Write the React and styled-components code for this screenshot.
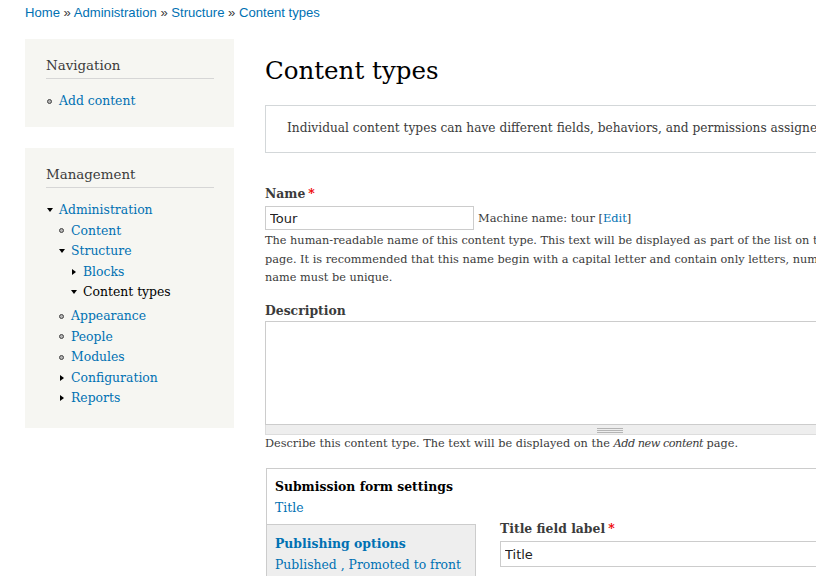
import React from "react";
import styled, { createGlobalStyle } from "styled-components";

const LINK = "#0071b3";
const TEXT = "#3b3b3b";
const SERIF = '"DejaVu Serif", "Liberation Serif", serif';
const SANS = '"DejaVu Sans", "Liberation Sans", sans-serif';

const GlobalStyle = createGlobalStyle`
  html, body { margin: 0; padding: 0; overflow: hidden; background: #fff; }
  body { font-family: ${SERIF}; color: ${TEXT}; }
  a { color: ${LINK}; text-decoration: none; }
`;

const Page = styled.div`
  width: 816px;
  height: 576px;
  overflow: hidden;
  box-sizing: border-box;
  padding: 4px 0 0 25px;
`;

const Breadcrumb = styled.nav`
  font-family: "Liberation Sans", Arial, sans-serif;
  font-size: 13.1px;
  line-height: 18px;
  color: ${TEXT};
  white-space: nowrap;
`;

const Layout = styled.div`
  display: flex;
  align-items: flex-start;
  gap: 31px;
  margin-top: 17px;
`;

const Sidebar = styled.aside`
  flex: 0 0 209px;
  display: flex;
  flex-direction: column;
  gap: 21px;
`;

const Block = styled.section`
  background: #f6f6f2;
  padding: 17px 20px ${(p) => p.$pb || 15.5}px 21px;
`;

const BlockTitle = styled.h2`
  margin: 0 0 12px;
  font-family: ${SERIF};
  font-weight: normal;
  font-size: 13.4px;
  line-height: 20px;
  color: ${TEXT};
  padding-bottom: 2px;
  border-bottom: 1px solid #d6d6d6;
`;

const Menu = styled.ul`
  list-style: none;
  margin: 0 0 ${(p) => (p.$nested ? 3.5 : 0)}px;
  padding: 0 0 0 ${(p) => (p.$nested ? 12 : 0)}px;
`;

const Item = styled.li`
  margin: 0;
  padding: 0;
`;

const ItemRow = styled.div`
  display: flex;
  align-items: center;
  height: 20.5px;
  font-size: 12.4px;
  line-height: 20.5px;
  white-space: nowrap;
  color: ${(p) => (p.$active ? "#000" : TEXT)};
`;

const MarkerBox = styled.span`
  flex: 0 0 7px;
  height: 8px;
  margin-right: 6px;
  display: flex;
  align-items: center;
  justify-content: center;
`;

const Leaf = styled.span`
  width: 5px;
  height: 5px;
  box-sizing: border-box;
  border-radius: 50%;
  border: 1px solid #444;
  background: #b5b5b5;
`;

const Open = styled.span`
  width: 0;
  height: 0;
  border-left: 3px solid transparent;
  border-right: 3px solid transparent;
  border-top: 4px solid #000;
`;

const Closed = styled.span`
  width: 0;
  height: 0;
  border-top: 3px solid transparent;
  border-bottom: 3px solid transparent;
  border-left: 4px solid #000;
`;

function Marker({ kind }) {
  return (
    <MarkerBox>
      {kind === "leaf" && <Leaf />}
      {kind === "open" && <Open />}
      {kind === "closed" && <Closed />}
    </MarkerBox>
  );
}

function MenuItem({ kind, label, active, children }) {
  return (
    <Item>
      <ItemRow $active={active}>
        <Marker kind={kind} />
        {active ? <span>{label}</span> : <a href="#">{label}</a>}
      </ItemRow>
      {children}
    </Item>
  );
}

const Main = styled.main`
  flex: 0 0 690px;
  width: 690px;
`;

const Title = styled.h1`
  margin: 17px 0 19px;
  font-family: ${SERIF};
  font-weight: normal;
  font-size: 24.5px;
  line-height: 30px;
  color: #000;
  white-space: nowrap;
`;

const Help = styled.div`
  border: 1px solid #d3d7d9;
  padding: 12px 21px 14px;
  font-size: 12.2px;
  line-height: 20px;
  white-space: nowrap;
  overflow: hidden;
`;

const FormItem = styled.div`
  margin-top: ${(p) => p.$mt}px;
`;

const Label = styled.label`
  display: block;
  font-weight: bold;
  font-size: 12.4px;
  line-height: 18px;
  color: ${(p) => p.$color || TEXT};
  margin-top: ${(p) => p.$mt || 0}px;
  margin-bottom: ${(p) => p.$mb}px;
  white-space: nowrap;
`;

const Req = styled.span`
  color: #e00;
  margin-left: 3px;
`;

const InputRow = styled.div`
  display: flex;
  align-items: center;
  gap: 4px;
`;

const TextInput = styled.input`
  box-sizing: border-box;
  width: ${(p) => p.$w || "100%"};
  height: ${(p) => p.$h}px;
  border: 1px solid #ccc;
  border-radius: 0;
  padding: 0 4px;
  margin: 0;
  font-family: ${SANS};
  font-size: 13px;
  color: #222;
  background: #fff;
  outline: none;
`;

const Machine = styled.span`
  font-size: 11.4px;
  line-height: 18px;
  white-space: nowrap;
`;

const Desc = styled.div`
  margin-top: ${(p) => (p.$mt === undefined ? 2 : p.$mt)}px;
  font-size: 11.3px;
  line-height: 18px;
  white-space: nowrap;
`;

const Em = styled.em`
  letter-spacing: -0.5px;
`;

const TextArea = styled.textarea`
  display: block;
  box-sizing: border-box;
  width: 100%;
  height: 104px;
  margin: 0;
  border: 1px solid #ccc;
  resize: none;
  outline: none;
  background: #fff;
`;

const Grippie = styled.div`
  box-sizing: border-box;
  height: 10px;
  background: #eee;
  border: 1px solid #ddd;
  border-top: none;
  display: flex;
  justify-content: center;
  align-items: flex-start;
  padding-top: 3px;
`;

const VTabs = styled.div`
  display: flex;
  margin: 15px 0 0 1px;
  border-top: 1px solid #ccc;
  border-left: 1px solid #ccc;
`;

const TabList = styled.ul`
  flex: 0 0 209px;
  list-style: none;
  margin: 0;
  padding: 0;
`;

const Tab = styled.li`
  padding: ${(p) => (p.$selected ? "9px 8px 7px" : "10px 8px 7px")};
  background: ${(p) => (p.$selected ? "#fff" : "#eee")};
  border-top: ${(p) => (p.$selected ? "none" : "1px solid #ccc")};
  border-right: ${(p) => (p.$selected ? "none" : "1px solid #ccc")};
  white-space: nowrap;
`;

const TabTitle = styled.div`
  font-weight: bold;
  font-size: 12.4px;
  line-height: 18px;
  color: ${(p) => (p.$selected ? "#000" : LINK)};
`;

const TabSummary = styled.div`
  margin-top: 3px;
  font-size: 12.4px;
  line-height: 18px;
  color: ${LINK};
`;

const Pane = styled.div`
  flex: 1;
  padding: 51px 0 0 24px;
`;

export default function App() {
  return (
    <Page>
      <GlobalStyle />
      <Breadcrumb>
        <a href="#">Home</a> » <a href="#">Administration</a> »{" "}
        <a href="#">Structure</a> » <a href="#">Content types</a>
      </Breadcrumb>
      <Layout>
        <Sidebar>
          <Block>
            <BlockTitle>Navigation</BlockTitle>
            <Menu>
              <MenuItem kind="leaf" label="Add content" />
            </Menu>
          </Block>
          <Block $pb={16}>
            <BlockTitle>Management</BlockTitle>
            <Menu>
              <MenuItem kind="open" label="Administration">
                <Menu $nested>
                  <MenuItem kind="leaf" label="Content" />
                  <MenuItem kind="open" label="Structure">
                    <Menu $nested>
                      <MenuItem kind="closed" label="Blocks" />
                      <MenuItem kind="open" label="Content types" active />
                    </Menu>
                  </MenuItem>
                  <MenuItem kind="leaf" label="Appearance" />
                  <MenuItem kind="leaf" label="People" />
                  <MenuItem kind="leaf" label="Modules" />
                  <MenuItem kind="closed" label="Configuration" />
                  <MenuItem kind="closed" label="Reports" />
                </Menu>
              </MenuItem>
            </Menu>
          </Block>
        </Sidebar>
        <Main>
          <Title>Content types</Title>
          <Help>
            Individual content types can have different fields, behaviors, and
            permissions assigned to them.
          </Help>
          <FormItem $mt={32}>
            <Label $mb={3}>
              Name<Req>*</Req>
            </Label>
            <InputRow>
              <TextInput $w="209px" $h={24} defaultValue="Tour" />
              <Machine>
                Machine name: tour [<a href="#">Edit</a>]
              </Machine>
            </InputRow>
            <Desc>
              The human-readable name of this content type. This text will be
              displayed as part of the list on the <Em>Add new content</Em>
              <br />
              page. It is recommended that this name begin with a capital letter
              and contain only letters, numbers, and <strong>spaces</strong>.
              This
              <br />
              name must be unique.
            </Desc>
          </FormItem>
          <FormItem $mt={15}>
            <Label $mb={1}>Description</Label>
            <TextArea />
            <Grippie>
              <svg width="26" height="5" viewBox="0 0 26 5">
                <rect x="0" y="0" width="26" height="1" fill="#b4b4b4" />
                <rect x="0" y="2" width="26" height="1" fill="#b4b4b4" />
                <rect x="0" y="4" width="26" height="1" fill="#b4b4b4" />
              </svg>
            </Grippie>
            <Desc $mt={0}>
              Describe this content type. The text will be displayed on the{" "}
              <Em>Add new content</Em> page.
            </Desc>
          </FormItem>
          <VTabs>
            <TabList>
              <Tab $selected>
                <TabTitle $selected>Submission form settings</TabTitle>
                <TabSummary>Title</TabSummary>
              </Tab>
              <Tab>
                <TabTitle>Publishing options</TabTitle>
                <TabSummary>Published , Promoted to front</TabSummary>
              </Tab>
            </TabList>
            <Pane>
              <Label $mb={3}>
                Title field label<Req>*</Req>
              </Label>
              <TextInput $h={26} defaultValue="Title" />
            </Pane>
          </VTabs>
        </Main>
      </Layout>
    </Page>
  );
}
